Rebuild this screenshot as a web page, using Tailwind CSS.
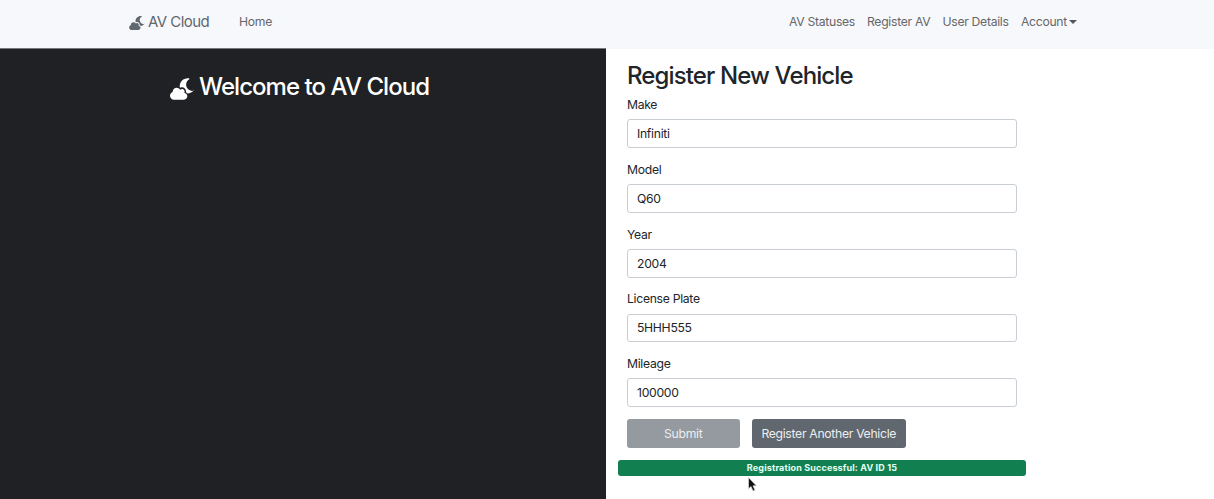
<!DOCTYPE html>
<html lang="en">
<head>
<meta charset="utf-8">
<title>AV Cloud</title>
<script src="https://cdn.jsdelivr.net/npm/@tailwindcss/browser@4"></script>
</head>
<body class="h-[499px] w-[1214px] overflow-hidden bg-white font-['Inter',sans-serif] text-[12.2px] leading-[18px] tracking-[-0.3px] text-[#212529]">
<svg class="hidden"><symbol id="cloud-moon" viewBox="0 0 576 512"><path fill="currentColor" d="M342.8 352.7c5.7-9.6 9.2-20.7 9.2-32.7 0-35.3-28.7-64-64-64-17.2 0-32.8 6.9-44.3 17.9-16.3-29.6-47.5-49.9-83.7-49.9-53 0-96 43-96 96 0 2 .5 3.8.6 5.7C27.1 338.8 0 374.1 0 416c0 53 43 96 96 96h240c44.2 0 80-35.8 80-80 0-41.9-32.3-75.8-73.2-79.3z"/><path fill="currentColor" d="M565.3 298.4c-93.1 17.7-178.5-53.7-178.5-147.7 0-54.2 29-104 76.1-130.8 7.3-4.1 5.4-15.1-2.8-16.7C448.4 1.1 436.7 0 425 0 319.1 0 233.1 85.9 233.1 191.9c0 8.5.7 16.8 1.8 25 4.3 3.1 8.6 6.2 12.4 9.9 12.4-6.9 26.4-10.8 40.7-10.8 52.900 0 96 43.100 96 96 0 7-.8 13.800-2.200 20.400 14.800 7.700 27.800 18.400 38.200 31.500 61.400-1.200 118.300-29.800 156.900-76.900 5.400-6.600-1.600-16.400-11.600-14.600z"/></symbol></svg>
<header class="flex h-[48.5px] bg-[#f7f8fb] pl-[129px] pr-[137px] text-[#666769]">
  <div class="flex h-[43px] w-[110px] items-center text-[15px] text-[#60676e]"><svg class="mr-[3px] mt-[3px] h-[14px] w-[16px]"><use href="#cloud-moon"/></svg><span class="whitespace-nowrap tracking-[-0.55px]">AV Cloud</span></div>
  <div class="flex h-[43px] flex-1 items-center">Home</div>
  <nav class="flex h-[43px] items-center whitespace-nowrap">
    <span class="w-[78px]">AV Statuses</span><span class="w-[75.5px]">Register AV</span><span class="w-[78.5px]">User Details</span><span class="w-[48px]">Account</span>
    <span class="border-x-4 border-t-4 border-x-transparent border-t-[#55575a]"></span>
  </nav>
</header>
<main class="-mt-[0.5px] flex h-[451px]">
  <section class="flex w-[606px] items-start border-t border-[#77797c] bg-[#202124] pl-[170px] pt-[23px] text-white">
    <svg class="mr-[5px] mt-[6px] h-[22px] w-[24px]"><use href="#cloud-moon"/></svg>
    <h1 class="whitespace-nowrap text-[24px] font-medium leading-[29px] tracking-[-0.95px]">Welcome to AV Cloud</h1>
  </section>
  <section class="w-[608px] pl-[21px] pt-[13px]">
    <h2 class="text-[24px] font-medium leading-[29px] tracking-[-0.88px]">Register New Vehicle</h2>
    <div class="mt-[5.25px] flex w-[390px] flex-col gap-[12px]">
      <div><div class="h-[24px] pt-[0.75px]">Make</div><div class="flex h-[28.75px] items-center rounded-[3px] border border-[#c9ced4] px-[9px] pt-[0.5px]">Infiniti</div></div>
      <div><div class="h-[24px] pt-[0.75px]">Model</div><div class="flex h-[28.75px] items-center rounded-[3px] border border-[#c9ced4] px-[9px] pt-[0.5px]">Q60</div></div>
      <div><div class="h-[24px] pt-[0.75px]">Year</div><div class="flex h-[28.75px] items-center rounded-[3px] border border-[#c9ced4] px-[9px] pt-[0.75px]">2004</div></div>
      <div><div class="h-[24px] pt-[0.75px]">License Plate</div><div class="flex h-[28.75px] items-center rounded-[3px] border border-[#c9ced4] px-[9px] pt-[1px]">5HHH555</div></div>
      <div><div class="h-[24px] pt-[0.75px]">Mileage</div><div class="flex h-[28.75px] items-center rounded-[3px] border border-[#c9ced4] px-[9px] pt-[0.5px]">100000</div></div>
      <div class="flex gap-[12px] text-[#eceef0]"><div class="flex h-[28.5px] w-[112.5px] items-center justify-center rounded-[3px] bg-[#949a9f] pt-px">Submit</div><div class="flex h-[28.5px] w-[154.5px] items-center justify-center whitespace-nowrap rounded-[3px] bg-[#60676e] pt-px">Register Another Vehicle</div></div>
    </div>
    <div class="-ml-[9px] mt-[12px] flex h-[16px] w-[408px] items-center justify-center rounded-[3px] bg-[#117f50] text-[9px] font-bold tracking-[0.15px] text-[#e5fff2]">Registration Successful: AV ID 15</div>
  </section>
</main>
<svg class="absolute left-[748px] top-[477px] h-[15px] w-[9px]" viewBox="0 0 9 15"><path d="M.5.5v11.300l2.500-2.300 2 4.500 2-.9-2-4.300h3.400z" fill="#111" stroke="#ddd" stroke-width=".7"/></svg>
</body>
</html>
